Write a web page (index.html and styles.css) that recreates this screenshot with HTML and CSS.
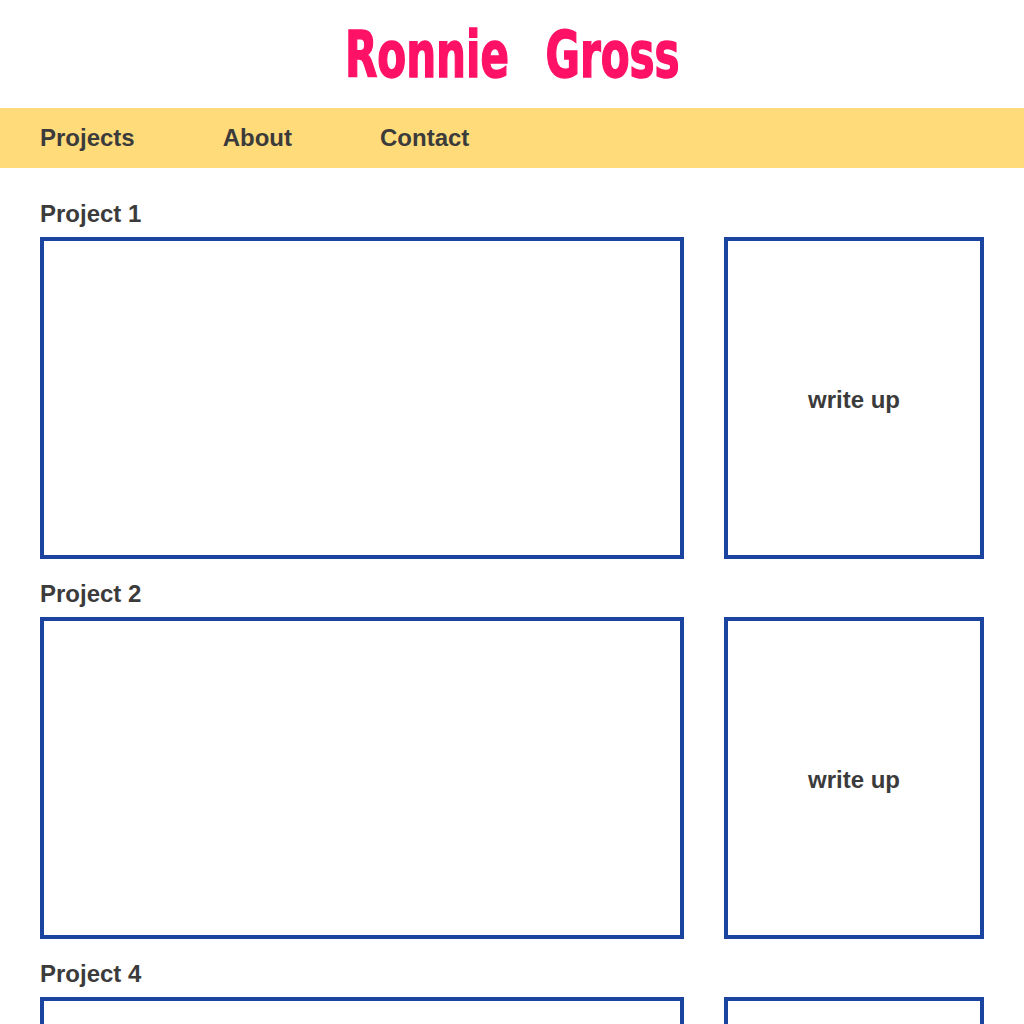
FILE: index.html
```html
<!DOCTYPE html>
<html lang="en">
<head>
<meta charset="utf-8">
<title>Ronnie Gross</title>
<link rel="stylesheet" href="styles.css">
</head>
<body>
<header class="masthead">
  <h1 class="site-title">Ronnie Gross</h1>
</header>
<nav class="main-nav">
  <a class="nav-link" href="#">Projects</a>
  <a class="nav-link" href="#">About</a>
  <a class="nav-link" href="#">Contact</a>
</nav>
<main class="projects">
  <section class="project">
    <h2 class="project-title">Project 1</h2>
    <div class="project-row">
      <div class="project-media"></div>
      <div class="project-writeup">write up</div>
    </div>
  </section>
  <section class="project">
    <h2 class="project-title">Project 2</h2>
    <div class="project-row">
      <div class="project-media"></div>
      <div class="project-writeup">write up</div>
    </div>
  </section>
  <section class="project">
    <h2 class="project-title">Project 4</h2>
    <div class="project-row">
      <div class="project-media"></div>
      <div class="project-writeup">write up</div>
    </div>
  </section>
</main>
</body>
</html>
```
FILE: styles.css
```css
* { box-sizing: border-box; }
html, body { margin: 0; padding: 0; background: #ffffff; }
body {
  font-family: "Liberation Sans", Arial, sans-serif;
  color: #3b3b3b;
}
.masthead {
  height: 108px;
  display: flex;
  align-items: center;
  justify-content: center;
  padding-top: 2px;
}
.site-title {
  margin: 0;
  display: inline-block;
  font-family: "DejaVu Sans Condensed", "Liberation Sans", sans-serif;
  font-weight: 700;
  font-size: 64px;
  line-height: 1;
  color: #ff1166;
  word-spacing: 30px;
  transform: scaleX(0.73);
  -webkit-text-stroke: 1.5px #ff1166;
}
.main-nav {
  height: 60px;
  background: #ffdb7a;
  display: flex;
  align-items: center;
  gap: 88px;
  padding: 0 40px;
}
.nav-link {
  font-size: 24px;
  font-weight: 700;
  color: #3b3b3b;
  text-decoration: none;
}
.projects {
  padding: 32px 40px 0;
}
.project {
  margin-bottom: 21px;
}
.project-title {
  margin: 0 0 9px;
  font-size: 24px;
  line-height: 28px;
  font-weight: 700;
  color: #3b3b3b;
}
.project-row {
  display: flex;
  gap: 40px;
  height: 322px;
}
.project-media,
.project-writeup {
  border: 4px solid #1a44a0;
}
.project-media {
  width: 644px;
}
.project-writeup {
  width: 260px;
  display: flex;
  align-items: center;
  justify-content: center;
  padding-top: 3px;
  font-size: 24px;
  font-weight: 700;
}
```
